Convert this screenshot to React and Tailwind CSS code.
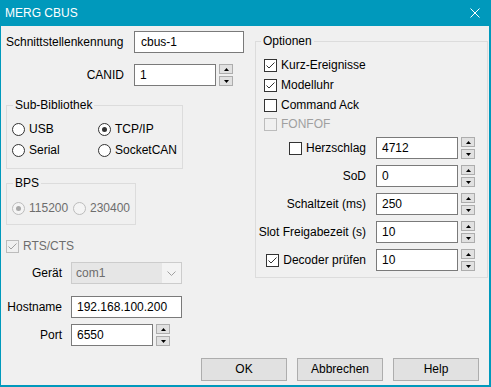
import React from "react";

const Tri = ({ down }) => (
  <svg width="5" height="3" viewBox="0 0 5 3">
    <polygon points={down ? "0,0 5,0 2.5,3" : "2.5,0 5,3 0,3"} fill="#000" />
  </svg>
);

const Spinner = () => (
  <div className="ml-[3px] flex flex-col gap-[2px]">
    <div className="w-[14px] h-[10px] border border-[#adadad] bg-[#e1e1e1] flex items-center justify-center">
      <Tri />
    </div>
    <div className="w-[14px] h-[10px] border border-[#adadad] bg-[#e1e1e1] flex items-center justify-center">
      <Tri down />
    </div>
  </div>
);

const TextBox = ({ value, className = "" }) => (
  <div
    className={`h-[22px] border border-[#7a7a7a] bg-white flex items-center pl-[5px] whitespace-nowrap ${className}`}
  >
    {value}
  </div>
);

const CheckBox = ({ checked, disabled }) => (
  <span
    className={`w-[13px] h-[13px] shrink-0 border flex items-center justify-center ${
      disabled ? "border-[#bcbcbc] bg-[#f0f0f0]" : "border-[#333333] bg-white"
    }`}
  >
    {checked && (
      <svg width="11" height="11" viewBox="0 0 11 11">
        <path
          d="M1.5 5.5 L4 8 L9.5 2.5"
          fill="none"
          stroke={disabled ? "#a0a0a0" : "#333333"}
          strokeWidth="1"
        />
      </svg>
    )}
  </span>
);

const Radio = ({ checked, disabled }) => (
  <span
    className={`w-[13px] h-[13px] shrink-0 rounded-full border flex items-center justify-center ${
      disabled ? "border-[#bcbcbc] bg-[#f4f4f4]" : "border-[#333333] bg-white"
    }`}
  >
    {checked && (
      <span
        className={`w-[5px] h-[5px] rounded-full ${
          disabled ? "bg-[#a8a8a8]" : "bg-[#333333]"
        }`}
      />
    )}
  </span>
);

const Option = ({ children, checked, disabled, radio, className = "" }) => (
  <div className={`flex items-center h-[15px] gap-[4px] ${className}`}>
    {radio ? (
      <Radio checked={checked} disabled={disabled} />
    ) : (
      <CheckBox checked={checked} disabled={disabled} />
    )}
    <span className={disabled ? "text-[#6d6d6d]" : ""}>{children}</span>
  </div>
);

const NumRow = ({ label, value }) => (
  <div className="flex items-center">
    <div className="w-[102px] flex justify-end whitespace-nowrap">{label}</div>
    <TextBox value={value} className="ml-[10px] w-[82px]" />
    <Spinner />
  </div>
);

const Button = ({ children }) => (
  <button className="w-[86px] h-[23px] border border-[#adadad] bg-[#e1e1e1] flex items-center justify-center">
    {children}
  </button>
);

export default function App() {
  return (
    <div className="w-[491px] h-[387px] bg-[#0099bc] pl-[1px] pr-[2px] pb-[2px] flex flex-col font-['Liberation_Sans',Arial,sans-serif] text-[12px] leading-[15px] text-black">
      {/* title bar */}
      <div className="h-[26px] shrink-0 flex items-center justify-between pl-[4px] pr-[9px] text-white">
        <span>MERG CBUS</span>
        <svg width="10" height="10" viewBox="0 0 10 10">
          <path d="M0.5 0.5 L9.5 9.5 M9.5 0.5 L0.5 9.5" stroke="#fff" strokeWidth="1" />
        </svg>
      </div>

      {/* body */}
      <div className="flex-1 bg-[#f0f0f0] pl-[5px] pt-[5px] flex flex-col">
        <div className="flex">
          {/* left column */}
          <div className="w-[238px] flex flex-col">
            <div className="flex items-center">
              <span className="w-[128px] whitespace-nowrap">Schnittstellenkennung</span>
              <TextBox value="cbus-1" className="w-[110px] pl-[6px]" />
            </div>
            <div className="flex items-center mt-[11px]">
              <span className="w-[118px] text-right">CANID</span>
              <TextBox value="1" className="ml-[10px] w-[82px]" />
              <Spinner />
            </div>

            <fieldset className="mt-[12px] w-[177px] h-[71px] border border-[#dcdcdc] pl-[5px] pt-[9px]">
              <legend className="ml-[1px] px-[2px]">Sub-Bibliothek</legend>
              <div className="grid grid-cols-[86px_1fr] gap-y-[6px]">
                <Option radio>USB</Option>
                <Option radio checked>TCP/IP</Option>
                <Option radio>Serial</Option>
                <Option radio>SocketCAN</Option>
              </div>
            </fieldset>

            <fieldset className="mt-[7px] w-[130px] h-[49px] border border-[#dcdcdc] pl-[5px] pt-[10px]">
              <legend className="ml-[1px] px-[2px]">BPS</legend>
              <div className="grid grid-cols-[61px_1fr]">
                <Option radio checked disabled>115200</Option>
                <Option radio disabled>230400</Option>
              </div>
            </fieldset>

            <Option checked disabled className="mt-[14px] gap-[3px]">
              RTS/CTS
            </Option>

            <div className="flex items-center mt-[8px]">
              <span className="w-[56px] text-right">Gerät</span>
              <div className="ml-[9px] w-[111px] h-[22px] border border-[#cccccc] bg-[#f3f3f3] flex">
                <div className="flex-1 bg-[#e6e6e6] flex items-center pl-[4px] text-[#6d6d6d]">
                  com1
                </div>
                <div className="w-[19px] flex items-center justify-center">
                  <svg width="9" height="5" viewBox="0 0 9 5">
                    <path d="M0.5 0.5 L4.5 4.5 L8.5 0.5" fill="none" stroke="#a0a0a0" strokeWidth="1" />
                  </svg>
                </div>
              </div>
            </div>
            <div className="flex items-center mt-[12px]">
              <span className="w-[56px] text-right">Hostname</span>
              <TextBox value="192.168.100.200" className="ml-[9px] w-[111px]" />
            </div>
            <div className="flex items-center mt-[6px]">
              <span className="w-[56px] text-right">Port</span>
              <TextBox value="6550" className="ml-[9px] w-[82px]" />
              <Spinner />
            </div>
          </div>

          {/* right column */}
          <fieldset className="ml-[11px] mt-[3px] w-[233px] h-[244px] border border-[#dcdcdc] pl-[8px] pt-[9px]">
            <legend className="-ml-[3px] px-[2px]">Optionen</legend>
            <div className="flex flex-col gap-[5px]">
              <Option checked>Kurz-Ereignisse</Option>
              <Option checked>Modelluhr</Option>
              <Option>Command Ack</Option>
              <div className="flex items-center h-[15px] gap-[4px] -mt-[1px]">
                <CheckBox disabled />
                <span className="text-[#a0a0a0]">FONFOF</span>
              </div>
            </div>
            <div className="flex flex-col gap-[6px] mt-[5px]">
              <NumRow
                value="4712"
                label={
                  <span className="flex items-center gap-[4px]">
                    <CheckBox />
                    Herzschlag
                  </span>
                }
              />
              <NumRow label="SoD" value="0" />
              <NumRow label="Schaltzeit (ms)" value="250" />
              <NumRow label="Slot Freigabezeit (s)" value="10" />
              <NumRow
                value="10"
                label={
                  <span className="flex items-center gap-[4px]">
                    <CheckBox checked />
                    Decoder prüfen
                  </span>
                }
              />
            </div>
          </fieldset>
        </div>

        {/* buttons */}
        <div className="mt-[12px] flex justify-end gap-[10px] pr-[10px]">
          <Button>OK</Button>
          <Button>Abbrechen</Button>
          <Button>Help</Button>
        </div>
      </div>
    </div>
  );
}
